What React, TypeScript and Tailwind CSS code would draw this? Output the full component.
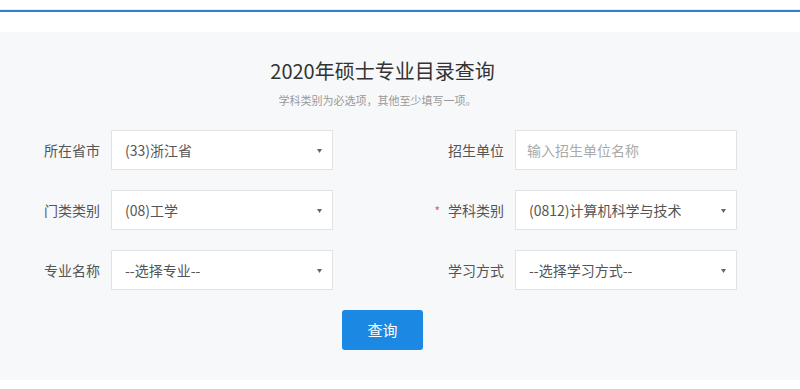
import React from "react"

const font = { fontFamily: '"Microsoft YaHei", "Noto Sans CJK SC", "Noto Sans", sans-serif' }

function Arrow() {
    return (
        <svg width="5" height="4" viewBox="0 0 5 4" className="absolute right-[10px] top-[18px]">
            <path d="M0 0 L5 0 L2.5 4 Z" fill="#666" />
        </svg>
    )
}

function SelectBox({ value }: { value: string }) {
    return (
        <div className="relative w-[222px] h-[40px] bg-white border border-[#e3e3e3] flex items-center pl-[13px] text-[14px] text-[#555]">
            {value}
            <Arrow />
        </div>
    )
}

function InputBox({ placeholder }: { placeholder: string }) {
    return (
        <div className="w-[222px] h-[40px] bg-white border border-[#e3e3e3] flex items-center pl-[11px] text-[14px] text-[#aaa]">
            {placeholder}
        </div>
    )
}

function Field({ label, required, children }: { label: string; required?: boolean; children: React.ReactNode }) {
    return (
        <div className="flex items-center">
            <div className="w-[100px] text-right text-[14px] text-[#555] mr-[11px]">
                {required && <span className="text-[#e85a5a] mr-[8px] text-[12px]">*</span>}
                {label}
            </div>
            {children}
        </div>
    )
}

export default function App() {
    return (
        <div className="w-[800px] h-[389px] bg-white overflow-hidden" style={font}>
            <div className="h-[9px]" />
            <div className="h-px bg-[#d9eefb]" />
            <div className="h-[2px] bg-[#2f80d2]" />
            <div className="h-[20px]" />
            <div className="h-[348px] bg-[#f7f8fa]">
                <div className="w-[765px] pt-[25px]">
                    <h1 className="text-center text-[20px] leading-[28px] text-[#333]">2020年硕士专业目录查询</h1>
                    <p className="text-center text-[11px] leading-[16px] text-[#999] mt-[7px] pr-[10px]">学科类别为必选项，其他至少填写一项。</p>
                    <div className="grid grid-cols-[404px_1fr] gap-y-[20px] mt-[22px]">
                        <Field label="所在省市"><SelectBox value="(33)浙江省" /></Field>
                        <Field label="招生单位"><InputBox placeholder="输入招生单位名称" /></Field>
                        <Field label="门类类别"><SelectBox value="(08)工学" /></Field>
                        <Field label="学科类别" required><SelectBox value="(0812)计算机科学与技术" /></Field>
                        <Field label="专业名称"><SelectBox value="--选择专业--" /></Field>
                        <Field label="学习方式"><SelectBox value="--选择学习方式--" /></Field>
                    </div>
                    <div className="flex justify-center mt-[20px]">
                        <button className="w-[81px] h-[40px] rounded-[3px] bg-[#1b88e3] text-white text-[15px]">查询</button>
                    </div>
                </div>
            </div>
        </div>
    )
}
